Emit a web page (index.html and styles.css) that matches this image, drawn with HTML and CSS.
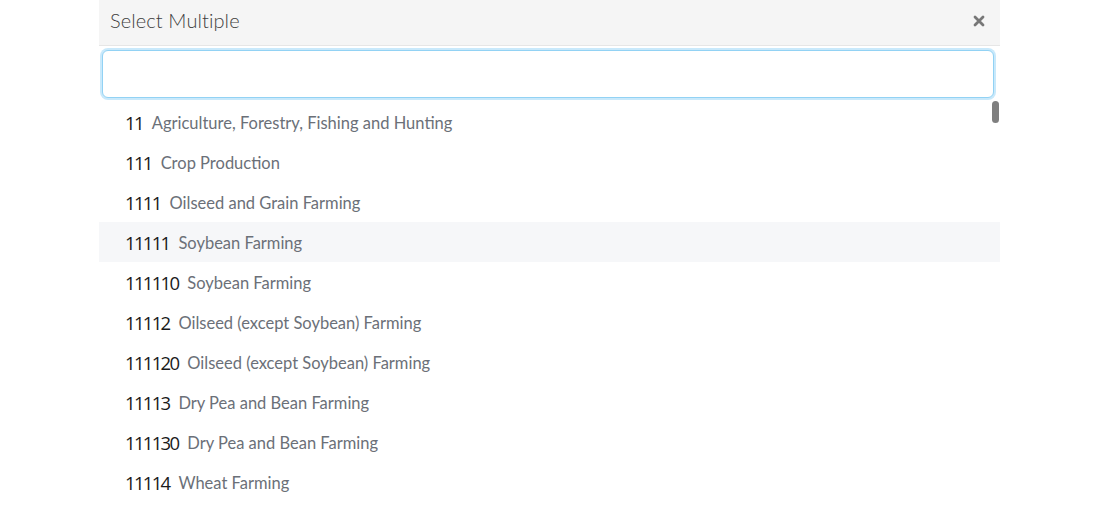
FILE: index.html
```html
<!DOCTYPE html>
<html>
<head>
<meta charset="utf-8">
<link rel="stylesheet" href="styles.css">
</head>
<body>
<div class="panel">
  <div class="header">
    <span class="title">Select Multiple</span>
    <svg class="close" width="12" height="12" viewBox="0 0 12 12"><path d="M2 2 L10 10 M10 2 L2 10" stroke="#777" stroke-width="2.8" stroke-linecap="round" fill="none"/></svg>
  </div>
  <div class="search"><input class="input" type="text"></div>
  <div class="list">
    <div class="item"><span class="code">11</span><span class="desc">Agriculture, Forestry, Fishing and Hunting</span></div>
    <div class="item"><span class="code">111</span><span class="desc">Crop Production</span></div>
    <div class="item"><span class="code">1111</span><span class="desc">Oilseed and Grain Farming</span></div>
    <div class="item hover"><span class="code">11111</span><span class="desc">Soybean Farming</span></div>
    <div class="item"><span class="code">111110</span><span class="desc">Soybean Farming</span></div>
    <div class="item"><span class="code">11112</span><span class="desc">Oilseed (except Soybean) Farming</span></div>
    <div class="item"><span class="code">111120</span><span class="desc">Oilseed (except Soybean) Farming</span></div>
    <div class="item"><span class="code">11113</span><span class="desc">Dry Pea and Bean Farming</span></div>
    <div class="item"><span class="code">111130</span><span class="desc">Dry Pea and Bean Farming</span></div>
    <div class="item"><span class="code">11114</span><span class="desc">Wheat Farming</span></div>
    <div class="scrollbar"></div>
  </div>
</div>
</body>
</html>
```
FILE: styles.css
```css
html, body {
  margin: 0;
  padding: 0;
  background: #fff;
  font-family: "Lato", "Open Sans", sans-serif;
  overflow: hidden;
}
.panel {
  width: 901px;
  margin-left: 99px;
  height: 506px;
  overflow: hidden;
}
.header {
  height: 45px;
  box-sizing: content-box;
  background: #f5f5f5;
  border-bottom: 1px solid #e6e6e6;
  display: flex;
  align-items: flex-start;
  justify-content: space-between;
  padding: 0 15px 0 11px;
}
.title {
  font-size: 20px;
  line-height: 20px;
  margin-top: 10px;
  color: #3f3f3f;
  font-weight: 300;
  letter-spacing: 0.1px;
}
.close {
  display: block;
  margin-top: 15px;
}
.search {
  padding: 4px 6px 0 3px;
}
.input {
  display: block;
  box-sizing: border-box;
  width: 100%;
  height: 48px;
  border: 1px solid #92d2f4;
  border-radius: 6px;
  box-shadow: 0 0 0 2px #c9e9fb;
  outline: none;
  background: #fff;
}
.list {
  position: relative;
  padding-top: 4px;
}
.item {
  height: 40px;
  display: flex;
  align-items: center;
  padding-left: 26px;
}
.item.hover {
  background: #f6f7f9;
}
.code {
  font-family: "Open Sans", sans-serif;
  font-size: 18.5px;
  letter-spacing: -1.7px;
  color: #1a1a1a;
  margin-right: 9px;
}
.desc {
  font-size: 16.5px;
  color: #6b7078;
  padding-top: 1px;
}
.scrollbar {
  position: absolute;
  right: 1px;
  top: 3px;
  width: 7px;
  height: 22px;
  background: #7f7f7f;
  border-radius: 4px;
}
```
